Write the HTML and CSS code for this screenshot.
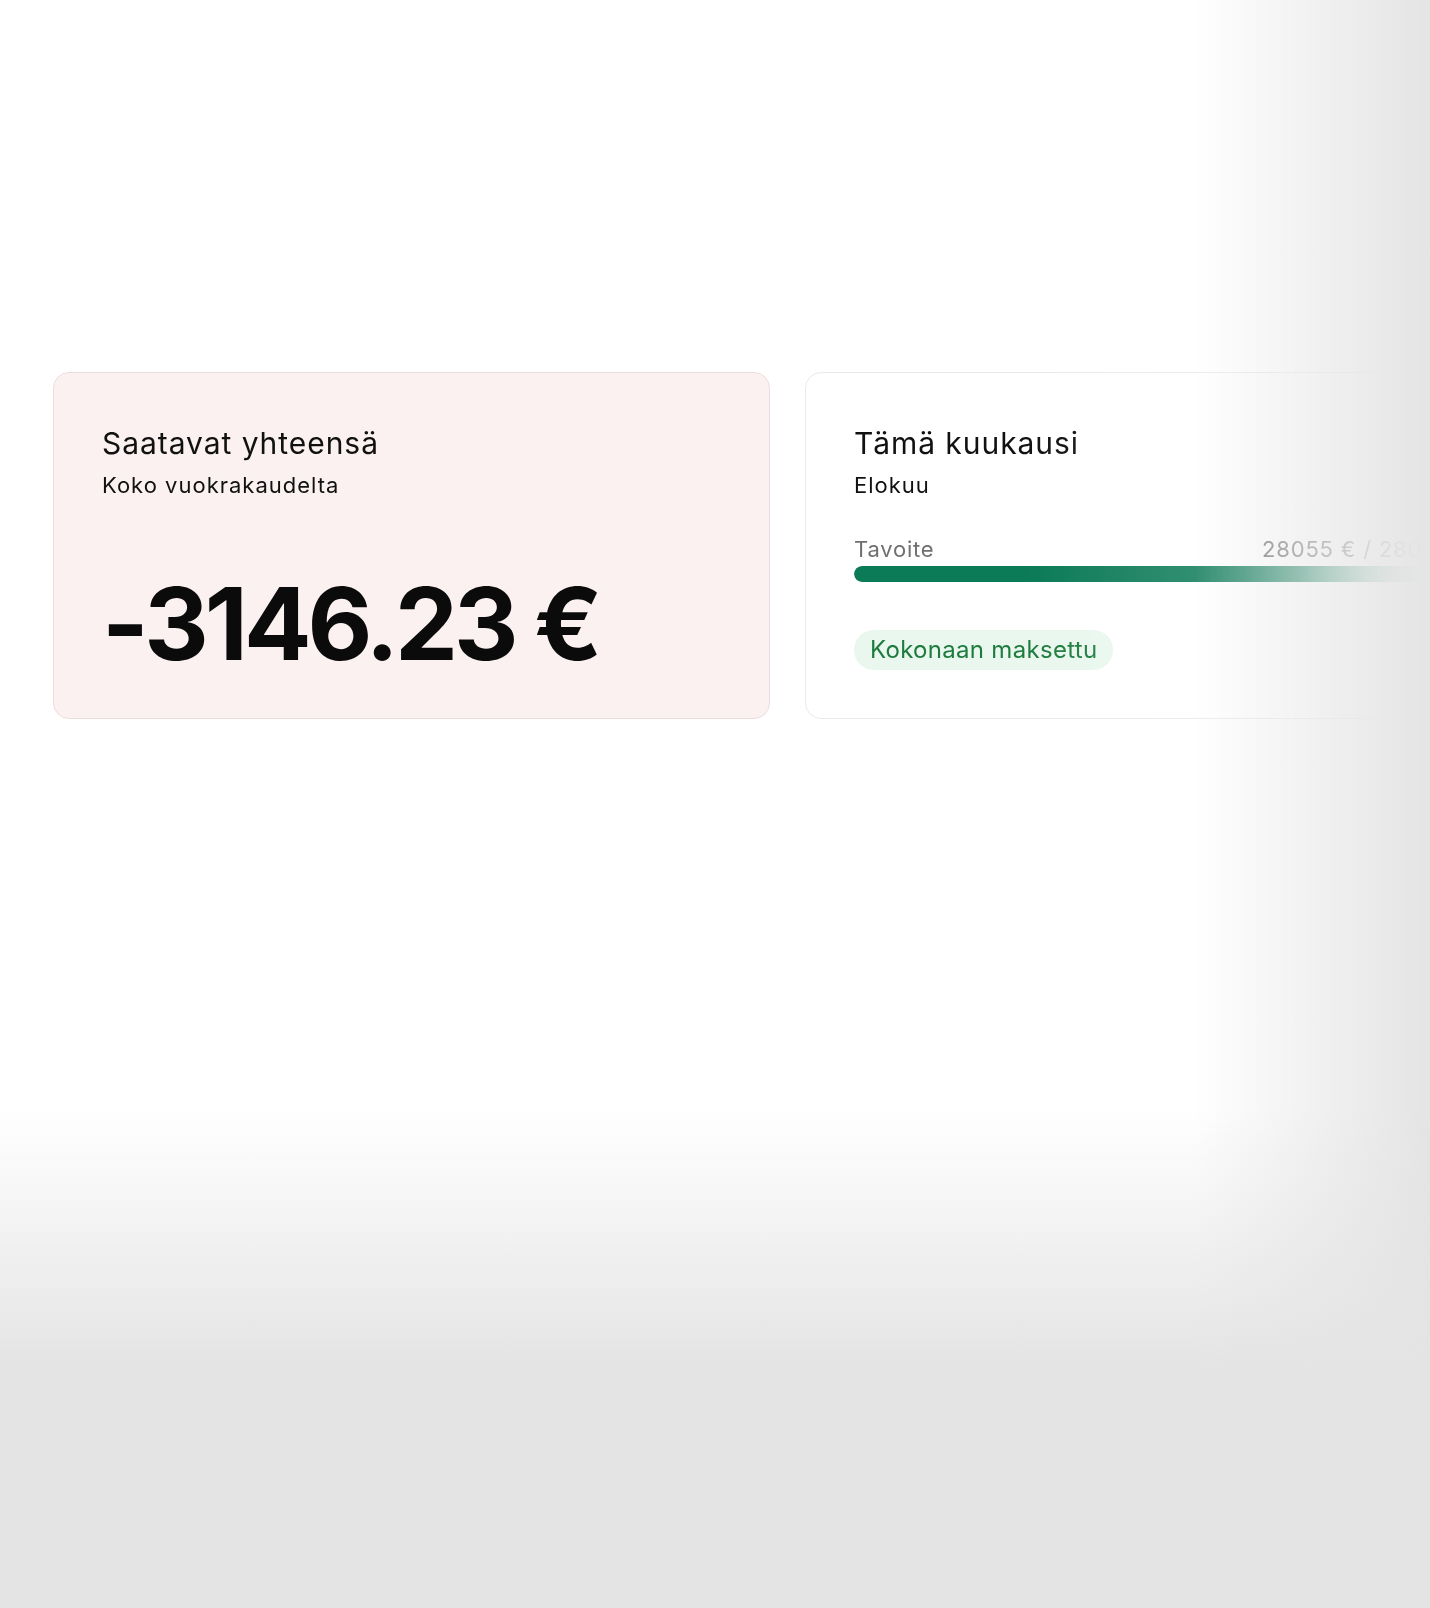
FILE: index.html
```html
<!DOCTYPE html>
<html lang="fi">
<head>
  <meta charset="UTF-8">
  <meta name="viewport" content="width=device-width, initial-scale=1.0">
  <title>Vuokraseuranta</title>
  <link rel="stylesheet" href="styles.css">
</head>
<body>
  <main class="page">
    <div class="cards">
      <section class="card card-due">
        <h2 class="card-title">Saatavat yhteensä</h2>
        <p class="card-sub">Koko vuokrakaudelta</p>
        <p class="amount">-3146.23 €</p>
      </section>

      <section class="card">
        <h2 class="card-title">Tämä kuukausi</h2>
        <p class="card-sub">Elokuu</p>
        <div class="goal-row">
          <span>Tavoite</span>
          <span class="goal-value">28055 € / 28055 €</span>
        </div>
        <div class="bar"><div class="bar-fill" style="width: 100%"></div></div>
        <span class="badge">Kokonaan maksettu</span>
      </section>
    </div>
  </main>

  <div class="fade"></div>
</body>
</html>
```

FILE: styles.css
```css
body {
  font-family: Inter, "Noto Sans", sans-serif;
  background: #fff;
  color: #111;
  margin: 0;
  padding: 0;
  height: 1608px;
  overflow: hidden;
}

.page {
  padding: 372px 0 0 53px;
}

.cards {
  display: flex;
  gap: 35px;
  /* the row runs off the right edge, so it fades out there */
  -webkit-mask-image: linear-gradient(to right, #000 975px, rgba(0, 0, 0, 0.8) 1190px, rgba(0, 0, 0, 0.6) 1290px, rgba(0, 0, 0, 0.3) 1360px, rgba(0, 0, 0, 0.15) 1377px);
  mask-image: linear-gradient(to right, #000 975px, rgba(0, 0, 0, 0.8) 1190px, rgba(0, 0, 0, 0.6) 1290px, rgba(0, 0, 0, 0.3) 1360px, rgba(0, 0, 0, 0.15) 1377px);
}

.card {
  flex: none;
  width: 717px;
  box-sizing: border-box;
  padding: 48px;
  background: #fff;
  border: 1px solid #e9e9e9;
  border-radius: 16px;
  display: flex;
  flex-direction: column;
  align-items: flex-start;
}

.card-due {
  background: #fcf1f1;
  border-color: #ecdcdd;
}

.card-title {
  font-size: 30px;
  line-height: 44px;
  font-weight: 400;
  letter-spacing: 0.95px;
  margin: 0;
}

.card-sub {
  font-size: 22px;
  line-height: 28px;
  letter-spacing: 1px;
  margin: 6px 0 0;
}

.amount {
  font-size: 100px;
  line-height: 90px;
  font-weight: 700;
  letter-spacing: -0.04em;
  color: #0b0b0b;
  margin: 80px 0 0;
}

.goal-row {
  align-self: stretch;
  display: flex;
  justify-content: space-between;
  font-size: 22px;
  line-height: 28px;
  letter-spacing: 0.8px;
  color: #707070;
  margin-top: 36px;
}

.goal-value {
  color: #5a5a5a;
}

.bar {
  align-self: stretch;
  height: 16px;
  margin-top: 3px;
  border-radius: 8px;
  background: #e6efe9;
  overflow: hidden;
}

.bar-fill {
  height: 100%;
  border-radius: 8px;
  background: linear-gradient(to right, #0b7a57 72%, rgba(11, 122, 87, 0.5) 90%, rgba(11, 122, 87, 0.15) 100%);
}

.badge {
  margin-top: 48px;
  height: 40px;
  line-height: 40px;
  padding: 0 16px;
  border-radius: 20px;
  background: #e9f7ee;
  color: #1d7c3d;
  font-size: 24px;
  letter-spacing: 0.3px;
}

.fade {
  position: fixed;
  inset: 0;
  pointer-events: none;
  background:
    linear-gradient(to right, rgba(228, 228, 228, 0) 83.5%, #e4e4e4 100%),
    linear-gradient(to bottom, rgba(228, 228, 228, 0) 69%, #e4e4e4 85%);
}
```
